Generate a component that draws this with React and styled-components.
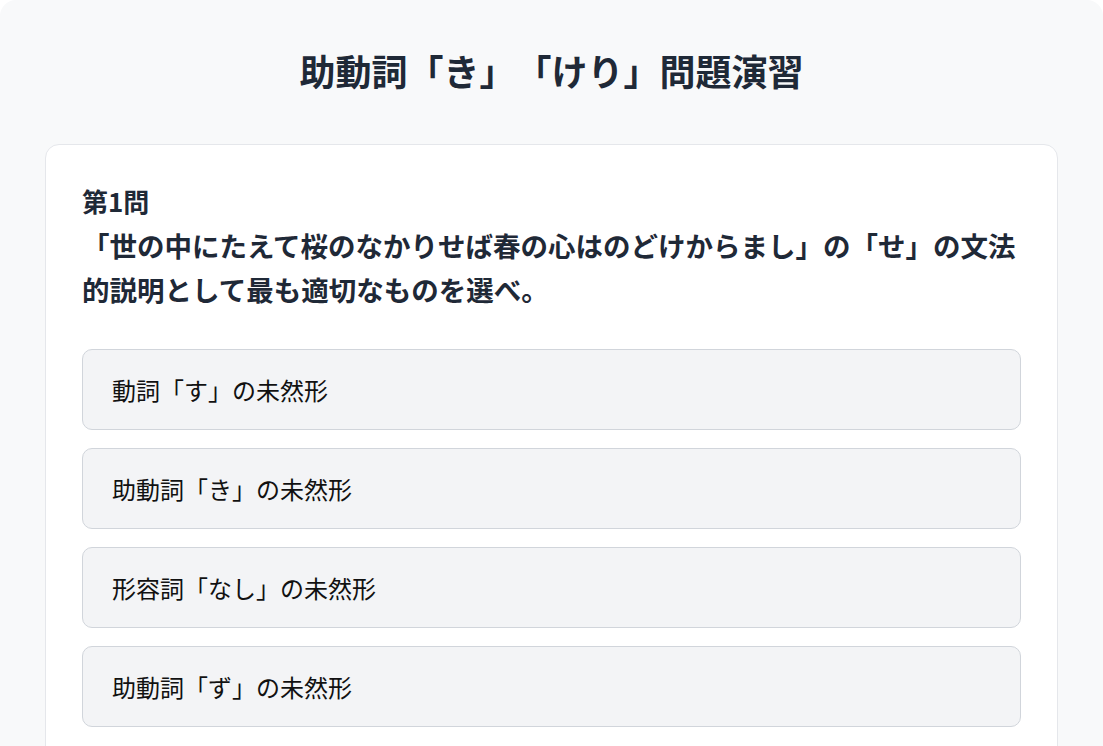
import React from "react";
import styled, { createGlobalStyle } from "styled-components";

const GlobalStyle = createGlobalStyle`
  html, body {
    margin: 0;
    padding: 0;
    background: #ffffff;
  }
  body {
    font-family: "Noto Sans CJK JP", "Noto Sans", sans-serif;
    text-spacing-trim: space-all;
  }
  * { box-sizing: border-box; }
`;

const Page = styled.div`
  background: #f8f9fa;
  border-radius: 16px;
  padding: 44px 45px 40px;
  min-height: 100vh;
`;

const Title = styled.h1`
  margin: 0 0 48px;
  text-align: center;
  font-size: 36px;
  line-height: 52px;
  font-weight: 700;
  color: #1f2937;
`;

const Card = styled.section`
  background: #ffffff;
  border: 1px solid #e5e7eb;
  border-radius: 14px;
  padding: 34px 36px 36px;
`;

const Question = styled.div`
  margin: 0 0 38px;
  font-size: 27.5px;
  line-height: 44px;
  font-weight: 700;
  color: #1f2937;
`;

const Number = styled.div`
  font-size: 26px;
`;

const Options = styled.div`
  display: flex;
  flex-direction: column;
  gap: 18px;
`;

const Option = styled.button`
  display: block;
  width: 100%;
  text-align: left;
  padding: 20px 29px;
  background: #f3f4f6;
  border: 1px solid #d1d5db;
  border-radius: 10px;
  font-family: inherit;
  font-size: 24px;
  line-height: 39px;
  font-weight: 400;
  color: #111111;
  cursor: pointer;
  text-spacing-trim: space-all;
`;

const options = [
  "動詞「す」の未然形",
  "助動詞「き」の未然形",
  "形容詞「なし」の未然形",
  "助動詞「ず」の未然形",
];

export default function App() {
  return (
    <>
      <GlobalStyle />
      <Page>
        <Title>助動詞「き」「けり」問題演習</Title>
        <Card>
          <Question>
            <Number>第1問</Number>
            「世の中にたえて桜のなかりせば春の心はのどけからまし」の「せ」の文法的説明として最も適切なものを選べ。
          </Question>
          <Options>
            {options.map((o) => (
              <Option key={o}>{o}</Option>
            ))}
          </Options>
        </Card>
      </Page>
    </>
  );
}
